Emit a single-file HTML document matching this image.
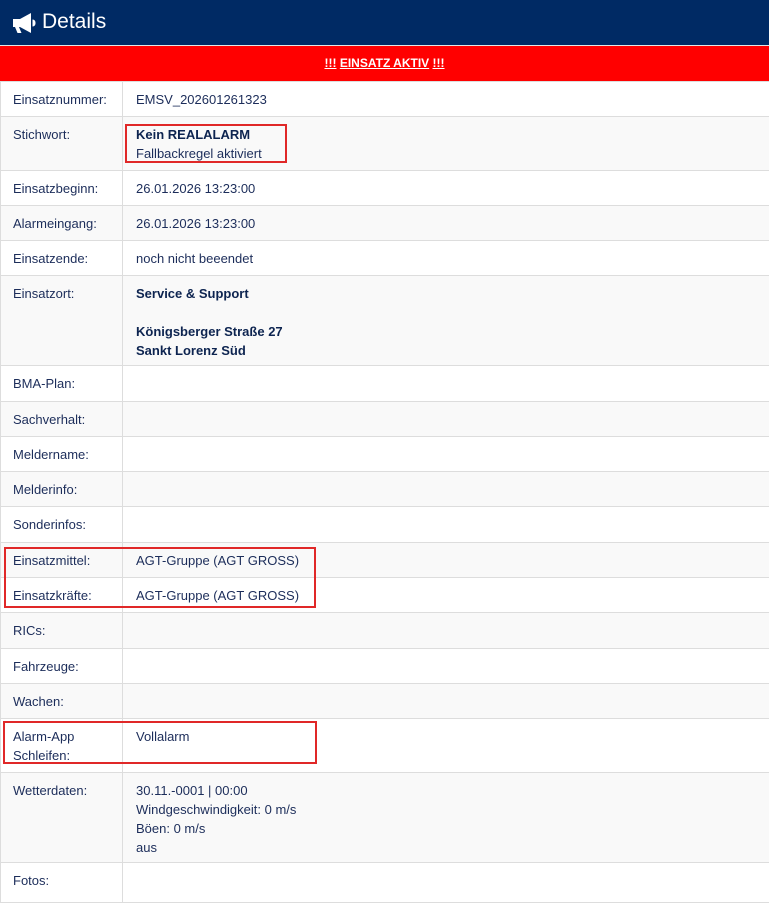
<!DOCTYPE html>
<html><head><meta charset="utf-8"><style>
*{margin:0;padding:0;box-sizing:border-box}
body{width:769px;height:896px;overflow:hidden;background:#fff;font-family:"Liberation Sans",sans-serif;font-size:13px;color:#1c2d5a;position:relative}
.hd{height:46px;background:#002a64;color:#fff;font-size:21px;position:relative;border-bottom:1px solid #e6e6e6}
.hd span{position:absolute;left:42px;top:10px}
.hd svg{position:absolute;left:13px;top:13px}
.red{height:36px;background:#ff0000;color:#fff;font-weight:bold;font-size:12px;text-align:center;line-height:34px;border-bottom:1px solid #ddd}
.row{display:flex;border-bottom:1px solid #ddd;border-left:1px solid #ddd;line-height:19px}
.l{width:122px;border-right:1px solid #ddd;padding:8px 0 0 12px;flex:none}
.v{padding:8px 0 0 13px}
b{color:#0d2450}
.box{position:absolute;border:2px solid #e02828}
</style></head><body>
<div class="hd"><svg width="23" height="20" viewBox="0 0 23 20"><path d="M0 6h7l11-6v20L7 14H6l2.5 6H4.5L2 14H0z" fill="#fff"/><path d="M19.5 6.5v7c2 0 3-1.5 3-3.5s-1-3.5-3-3.5z" fill="#fff"/></svg><span>Details</span></div>
<div class="red"><u>!!!</u> <u>EINSATZ AKTIV</u> <u>!!!</u></div>
<div id="t">
<div class="row" style="height:35px;background:#fff"><div class="l">Einsatznummer:</div><div class="v">EMSV_202601261323</div></div>
<div class="row" style="height:54px;background:#f9f9f9"><div class="l">Stichwort:</div><div class="v"><b>Kein REALALARM</b><br>Fallbackregel aktiviert</div></div>
<div class="row" style="height:35px;background:#fff"><div class="l">Einsatzbeginn:</div><div class="v">26.01.2026 13:23:00</div></div>
<div class="row" style="height:35px;background:#f9f9f9"><div class="l">Alarmeingang:</div><div class="v">26.01.2026 13:23:00</div></div>
<div class="row" style="height:35px;background:#fff"><div class="l">Einsatzende:</div><div class="v">noch nicht beeendet</div></div>
<div class="row" style="height:90px;background:#f9f9f9"><div class="l">Einsatzort:</div><div class="v"><b>Service &amp; Support</b><br><br><b>Königsberger Straße 27</b><br><b>Sankt Lorenz Süd</b></div></div>
<div class="row" style="height:36px;background:#fff"><div class="l">BMA-Plan:</div><div class="v"></div></div>
<div class="row" style="height:35px;background:#f9f9f9"><div class="l">Sachverhalt:</div><div class="v"></div></div>
<div class="row" style="height:35px;background:#fff"><div class="l">Meldername:</div><div class="v"></div></div>
<div class="row" style="height:35px;background:#f9f9f9"><div class="l">Melderinfo:</div><div class="v"></div></div>
<div class="row" style="height:36px;background:#fff"><div class="l">Sonderinfos:</div><div class="v"></div></div>
<div class="row" style="height:35px;background:#f9f9f9"><div class="l">Einsatzmittel:</div><div class="v">AGT-Gruppe (AGT GROSS)</div></div>
<div class="row" style="height:35px;background:#fff"><div class="l">Einsatzkräfte:</div><div class="v">AGT-Gruppe (AGT GROSS)</div></div>
<div class="row" style="height:36px;background:#f9f9f9"><div class="l">RICs:</div><div class="v"></div></div>
<div class="row" style="height:35px;background:#fff"><div class="l">Fahrzeuge:</div><div class="v"></div></div>
<div class="row" style="height:35px;background:#f9f9f9"><div class="l">Wachen:</div><div class="v"></div></div>
<div class="row" style="height:54px;background:#fff"><div class="l">Alarm-App<br>Schleifen:</div><div class="v">Vollalarm</div></div>
<div class="row" style="height:90px;background:#f9f9f9"><div class="l">Wetterdaten:</div><div class="v">30.11.-0001 | 00:00<br>Windgeschwindigkeit: 0 m/s<br>Böen: 0 m/s<br>aus</div></div>
<div class="row" style="height:40px;background:#fff"><div class="l">Fotos:</div><div class="v"></div></div>
</div>
<div class="box" style="left:125px;top:124px;width:162px;height:39px"></div>
<div class="box" style="left:4px;top:547px;width:312px;height:61px"></div>
<div class="box" style="left:3px;top:721px;width:314px;height:43px"></div>
</body></html>
